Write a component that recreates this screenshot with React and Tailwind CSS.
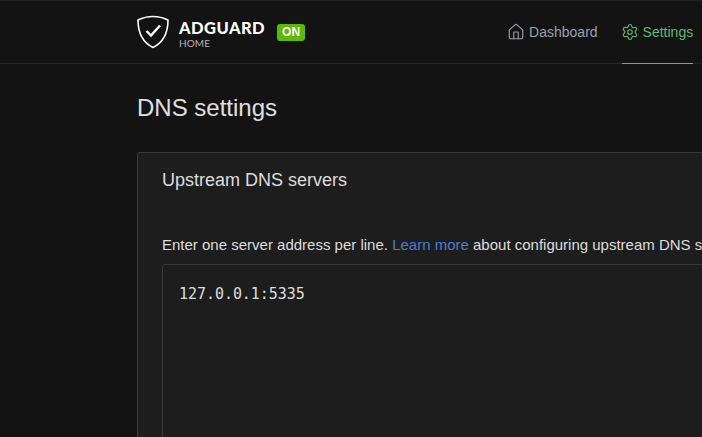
import { Home, Settings } from 'lucide-react';

function Logo() {
  return (
    <svg width="32" height="34" viewBox="0 0 32 34" fill="none" className="shrink-0">
      <path d="M16 1.500C11 1.500 5.500 2.800 1 5C1 16 4 26.500 16 32.500C28 26.500 31 16 31 5C26.500 2.800 21 1.500 16 1.500Z" stroke="#fff" strokeWidth="1.600" strokeLinejoin="round" />
      <path d="M9.500 16L14 20.500L23 10.500" stroke="#fff" strokeWidth="2.400" />
    </svg>
  );
}

function Header() {
  return (
    <div className="h-[64px] border-t border-b border-t-[#242424] border-b-[#272727] bg-[#131313]">
      <div className="flex h-full items-center pl-[137px]">
        <Logo />
        <div className="mt-[3px] ml-[10px] flex flex-col">
          <span className="font-['Lato',sans-serif] text-[16.500px] leading-[18px] font-black tracking-[0.45px] text-white">ADGUARD</span>
          <span className="font-['Lato',sans-serif] text-[10px] leading-[12px] tracking-[0.1px] text-[#b5b5b5]">HOME</span>
        </div>
        <span className="ml-[12px] rounded-[3px] bg-[#5eba00] px-[5px] text-[12px] leading-[17px] font-bold text-white">ON</span>
        <nav className="ml-[203px] flex h-full items-stretch text-[14px]">
          <a className="flex items-center gap-[5px] pr-[24px] text-[#9aa0ac]">
            <Home size={18} strokeWidth={1.500} className="-mx-[1px]" />
            <span>Dashboard</span>
          </a>
          <a className="-mb-px flex items-center gap-[4px] border-b border-[#67b279] text-[#66b574]">
            <Settings size={18} strokeWidth={1.500} className="-ml-[1px]" />
            <span>Settings</span>
          </a>
        </nav>
      </div>
    </div>
  );
}

export default function App() {
  return (
    <div className="h-screen w-[702px] overflow-hidden bg-[#131313] font-['Liberation_Sans',sans-serif]">
      <Header />
      <div className="w-[1100px] pl-[137px]">
        <h1 className="mt-[29px] text-[24px] leading-[30px] text-[#e0e0e0]">DNS settings</h1>
        <div className="mt-[29px] h-[400px] rounded-[3px] border border-[#3a3a3a] bg-[#1d1d1d]">
          <h2 className="mt-[16px] pl-[24px] text-[18px] leading-[22px] text-[#dddddd]">Upstream DNS servers</h2>
          <p className="mt-[43px] pl-[24px] text-[15px] leading-[22px] text-[#dddddd]">
            Enter one server address per line. <a className="text-[#467fcf]">Learn more</a> about configuring upstream DNS servers.
          </p>
          <div className="mt-[8px] ml-[24px] h-[300px] rounded-[3px] border border-[#3a3a3a] bg-[#1d1d1d] px-[16px] pt-[17px] font-['DejaVu_Sans_Mono',monospace] text-[15px] leading-[24px] tracking-[-0.05px] text-[#dddddd]">
            127.0.0.1:5335
          </div>
        </div>
      </div>
    </div>
  );
}
